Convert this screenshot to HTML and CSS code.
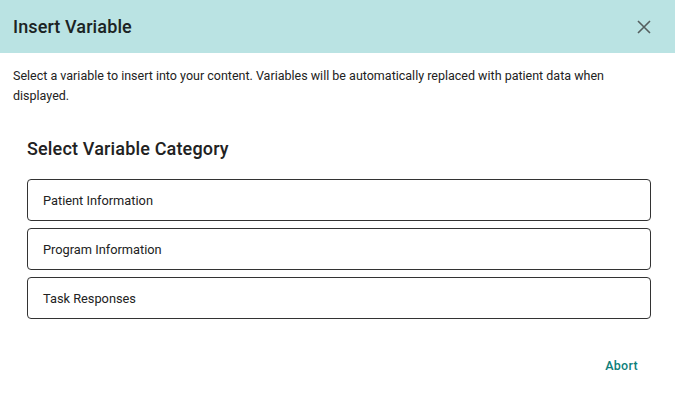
FILE: index.html
```html
<!DOCTYPE html>
<html>
<head>
<meta charset="utf-8">
<link rel="stylesheet" href="styles.css">
</head>
<body>
<div class="dialog">
  <header class="header">
    <h1 class="title">Insert Variable</h1>
    <button class="close" aria-label="Close">
      <svg width="14" height="14" viewBox="0 0 14 14"><path d="M1 1L13 13M13 1L1 13" stroke="#555f5f" stroke-width="1.6" fill="none"/></svg>
    </button>
  </header>
  <p class="desc">Select a variable to insert into your content. Variables will be automatically replaced with patient data when displayed.</p>
  <section class="content">
    <h2 class="subtitle">Select Variable Category</h2>
    <div class="list">
      <div class="item">Patient Information</div>
      <div class="item">Program Information</div>
      <div class="item">Task Responses</div>
    </div>
  </section>
  <footer class="footer">
    <button class="abort">Abort</button>
  </footer>
</div>
</body>
</html>
```
FILE: styles.css
```css
* { box-sizing: border-box; }
html, body { margin: 0; padding: 0; background: #fff; }
body { font-family: Roboto, "Noto Sans", sans-serif; color: #222; width: 675px; height: 407px; overflow: hidden; }
.dialog { display: flex; flex-direction: column; }
.header {
  height: 53px;
  background: #bae3e3;
  display: flex;
  align-items: center;
  justify-content: space-between;
  padding: 0 24px 0 13px;
}
.title { margin: 0; font-family: "Roboto Medium", Roboto, sans-serif; font-size: 18px; font-weight: 500; color: #1c2424; letter-spacing: 0.1px; }
.close { background: none; border: 0; padding: 0; width: 14px; height: 14px; display: flex; cursor: pointer; }
.desc { margin: 0; padding: 13px 40px 0 13px; font-size: 12.5px; line-height: 20px; color: #222; }
.content { padding: 31px 24px 0 27px; }
.subtitle { margin: 0 0 18px; font-family: "Roboto Medium", Roboto, sans-serif; font-size: 18px; font-weight: 500; color: #222; line-height: 24px; letter-spacing: 0.15px; }
.list { display: flex; flex-direction: column; gap: 7px; }
.item {
  height: 42px;
  border: 1px solid #333;
  border-radius: 4px;
  display: flex;
  align-items: center;
  padding-left: 15px;
  font-size: 12.8px;
  color: #222;
}
.footer { display: flex; justify-content: flex-end; padding: 39px 37px 0 0; }
.abort { background: none; border: 0; padding: 0; font-family: "Roboto Medium", Roboto, sans-serif; font-size: 12.5px; font-weight: 500; color: #0e7f7b; letter-spacing: 0.3px; cursor: pointer; }
```
